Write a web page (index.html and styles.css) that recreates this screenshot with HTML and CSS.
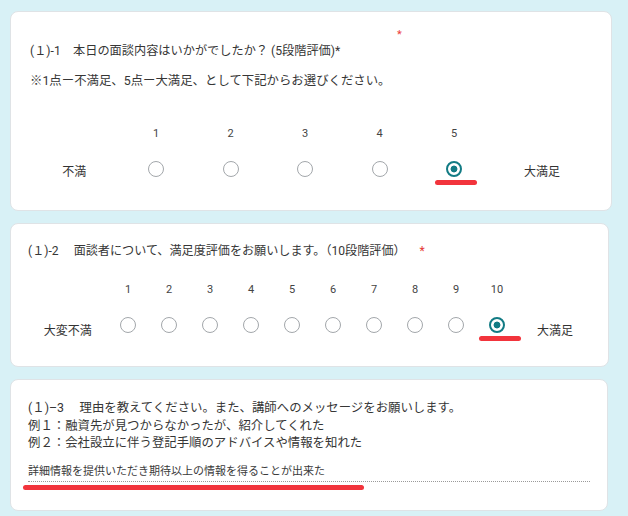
FILE: index.html
```html
<!DOCTYPE html>
<html lang="ja">
<head>
<meta charset="utf-8">
<title>面談アンケート</title>
<link rel="stylesheet" href="styles.css">
</head>
<body>
<main class="page">
  <section class="card card-q1">
    <span class="stray-star">*</span>
    <p class="title t1">(１)-1　本日の面談内容はいかがでしたか？ (5段階評価)*</p>
    <p class="note">※1点ー不満足、5点ー大満足、として下記からお選びください。</p>
    <div class="scale scale-5">
      <span></span>
      <span class="num">1</span><span class="num">2</span><span class="num">3</span><span class="num">4</span><span class="num">5</span>
      <span></span>
      <span class="end">不満</span>
      <span class="opt"><i class="radio"></i></span>
      <span class="opt"><i class="radio"></i></span>
      <span class="opt"><i class="radio"></i></span>
      <span class="opt"><i class="radio"></i></span>
      <span class="opt"><i class="radio on"></i><b class="mark"></b></span>
      <span class="end">大満足</span>
    </div>
  </section>

  <section class="card card-q2">
    <p class="title t2">(１)-2 　面談者について、満足度評価をお願いします。（10段階評価）<span class="req">*</span></p>
    <div class="scale scale-10">
      <span></span>
      <span class="num">1</span><span class="num">2</span><span class="num">3</span><span class="num">4</span><span class="num">5</span>
      <span class="num">6</span><span class="num">7</span><span class="num">8</span><span class="num">9</span><span class="num">10</span>
      <span></span>
      <span class="end">大変不満</span>
      <span class="opt"><i class="radio"></i></span>
      <span class="opt"><i class="radio"></i></span>
      <span class="opt"><i class="radio"></i></span>
      <span class="opt"><i class="radio"></i></span>
      <span class="opt"><i class="radio"></i></span>
      <span class="opt"><i class="radio"></i></span>
      <span class="opt"><i class="radio"></i></span>
      <span class="opt"><i class="radio"></i></span>
      <span class="opt"><i class="radio"></i></span>
      <span class="opt"><i class="radio on"></i><b class="mark"></b></span>
      <span class="end">大満足</span>
    </div>
  </section>

  <section class="card card-q3">
    <div class="title t3">
      <p>(１)–3 　理由を教えてください。また、講師へのメッセージをお願いします。</p>
      <p>例１：融資先が見つからなかったが、紹介してくれた</p>
      <p>例２：会社設立に伴う登記手順のアドバイスや情報を知れた</p>
    </div>
    <div class="answer">詳細情報を提供いただき期待以上の情報を得ることが出来た<b class="answer-mark"></b></div>
  </section>
</main>
</body>
</html>
```
FILE: styles.css
```css
* { box-sizing: border-box; }
html, body {
  margin: 0;
  padding: 0;
}
body {
  background: #d8f1f6;
  font-family: Roboto, "Noto Sans CJK JP", sans-serif;
  color: #363636;
  width: 628px;
  height: 516px;
  overflow: hidden;
}
p { margin: 0; }
.page {
  display: flex;
  flex-direction: column;
  gap: 12px;
  padding: 11px 0 0 10px;
}
.card {
  position: relative;
  background: #fff;
  border: 1px solid #dfe3e6;
  border-radius: 8px;
}
.card-q1 {
  width: 602px;
  padding: 30px 19px 30px 19px;
}
.card-q2 {
  width: 599px;
  padding: 18px 17px 27px 17px;
}
.card-q3 {
  width: 598px;
  padding: 19px 17px 28px 17px;
}
.stray-star {
  position: absolute;
  left: 386px;
  top: 17px;
  color: #ec3a3a;
  font-size: 11px;
  line-height: 12px;
}
.title {
  line-height: 18px;
  white-space: nowrap;
}
.t1 { font-size: 12.2px; }
.t2 { font-size: 12.1px; }
.t3 { font-size: 12.4px; line-height: 17.5px; }
.note {
  font-size: 12.4px;
  line-height: 18px;
  margin-top: 12px;
  white-space: nowrap;
}
.req {
  color: #e53935;
  margin-left: 14px;
}
.scale {
  display: grid;
  justify-items: center;
  align-items: start;
  row-gap: 20px;
}
.scale-5 {
  grid-template-columns: 88.75px repeat(5, 74.5px) 101.5px;
  margin-top: 37px;
}
.scale-10 {
  grid-template-columns: 79.5px repeat(10, 41px) 75px;
  margin-top: 23px;
}
.num {
  font-size: 11px;
  line-height: 14px;
  color: #444;
}
.end {
  font-size: 12px;
  line-height: 16px;
  color: #333;
  white-space: nowrap;
}
.scale-5 .end { margin-top: 3px; }
.scale-10 .end { margin-top: 6px; }
.opt {
  position: relative;
  width: 16px;
  height: 16px;
}
.radio {
  display: block;
  width: 16px;
  height: 16px;
  border: 1.5px solid #a3a7ab;
  border-radius: 50%;
}
.radio.on {
  border: 2px solid #127b84;
  background: radial-gradient(circle, #127b84 0 3.2px, transparent 3.7px);
}
.mark {
  position: absolute;
  left: -11px;
  top: 19px;
  width: 42px;
  height: 4.5px;
  border-radius: 3px;
  background: #f2343c;
}
.scale-10 .mark { left: -10px; }
.answer {
  position: relative;
  margin-top: 13.5px;
  width: 562px;
  font-size: 11px;
  line-height: 14px;
  padding-bottom: 2px;
  border-bottom: 1px dotted #9a9a9a;
  color: #3a3a3a;
  white-space: nowrap;
}
.answer-mark {
  position: absolute;
  left: -5px;
  top: 20px;
  width: 341px;
  height: 4.5px;
  border-radius: 3px;
  background: #f2343c;
}
```
